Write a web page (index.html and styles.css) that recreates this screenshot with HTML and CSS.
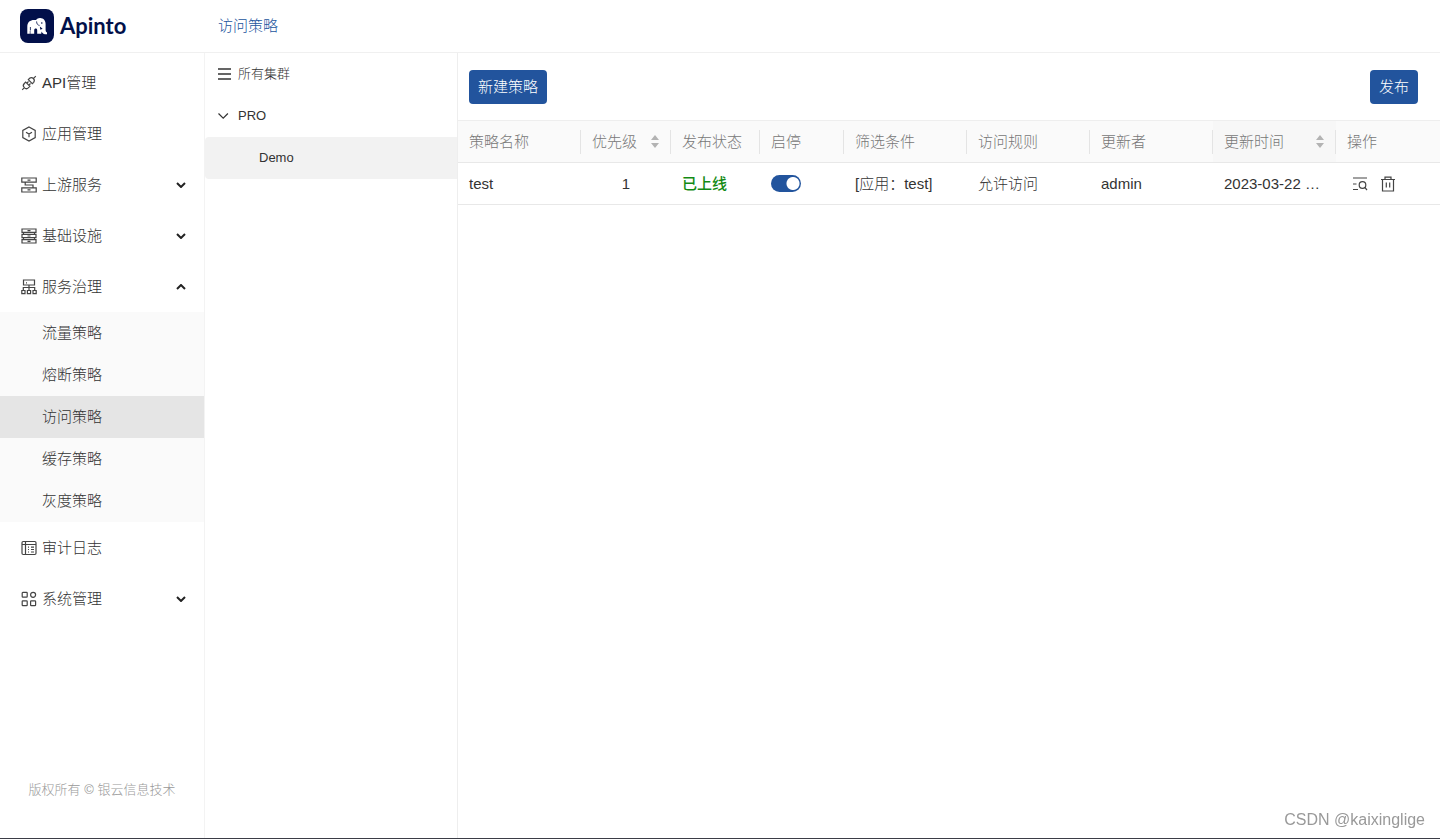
FILE: index.html
```html
<!DOCTYPE html>
<html lang="zh-CN">
<head>
<meta charset="utf-8">
<title>Apinto - 访问策略</title>
<link rel="stylesheet" href="styles.css">
</head>
<body>
<div class="app">
  <header class="topbar">
    <a class="brand" href="#">
      <svg class="brand-mark" viewBox="0 0 34 34" aria-hidden="true">
        <rect width="34" height="34" rx="8" fill="#02104a"/>
        <path fill="#fff" d="M7.3 24.8V17.5C7.3 13 10.2 10.9 14 10.9H16C17 9.5 18.5 8.8 20.2 8.9C23.6 9 25.6 11.5 25.6 15V20.8C25.6 22.3 26 23 27 23.5V25.2C24.2 25.3 22.4 24.6 21.6 22.4L21.2 24.8H17.2V21.3C17.2 20.2 16.6 19.6 15.7 19.6C14.8 19.6 14.2 20.2 14.2 21.3V24.8H10.4V20.6L9.8 22V24.8Z"/>
        <path fill="none" stroke="#02104a" stroke-width=".8" d="M16.6 12.4C16.6 14.8 17.6 16.2 19.6 16.4M10.4 18V21"/>
        <path fill="#02104a" d="M19.8 17.6 22.6 19.8 20.4 20.8Z"/>
        <circle cx="21.8" cy="14" r=".8" fill="#02104a"/>
      </svg>
      <span class="brand-name">Apinto</span>
    </a>
    <h1 class="page-title">访问策略</h1>
  </header>

  <div class="body">
    <nav class="sidebar" aria-label="主菜单">
      <div class="menu">
        <a class="menu-item" href="#">
          <svg class="icon" viewBox="0 0 16 16" aria-hidden="true"><path d="M1.2 14.8 3.4 12.6M12.6 3.4 14.8 1.2M4.7 7.1 8.9 11.3 7.5 12.7A2.9 2.9 0 0 1 3.3 8.5ZM7.3 4.7 11.3 8.7 12.7 7.3A2.9 2.9 0 0 0 8.6 3.3ZM5.9 8.1 7.5 6.5M7.9 10.1 9.5 8.5"/></svg>
          <span>API管理</span>
        </a>
        <a class="menu-item" href="#">
          <svg class="icon" viewBox="0 0 16 16" aria-hidden="true"><path d="M8 .9 14.2 4.4V11.6L8 15.1 1.8 11.6V4.4ZM5 6.2 8 8 11 6.2M8 8V11.3"/></svg>
          <span>应用管理</span>
        </a>
        <button class="menu-item" type="button" aria-expanded="false">
          <svg class="icon" viewBox="0 0 16 16" aria-hidden="true"><path d="M.8 1H15.2V5.2H.8ZM.8 10.8H15.2V15H.8ZM4.2 5.2V8H12V10.8M6.5 3.1H9.5M6.5 12.9H9.5"/></svg>
          <span>上游服务</span>
          <svg class="arrow" viewBox="0 0 10 6" aria-hidden="true"><path d="M1 1 5 5 9 1"/></svg>
        </button>
        <button class="menu-item" type="button" aria-expanded="false">
          <svg class="icon" viewBox="0 0 16 16" aria-hidden="true"><path d="M1 1H15V4.4H1ZM1 6.3H15V9.7H1ZM1 11.6H15V15H1ZM6.5 2.7H9.5M6.5 8H9.5M6.5 13.3H9.5M2.5 4.4V6.3M13.5 4.4V6.3M2.5 9.7V11.6M13.5 9.7V11.6"/></svg>
          <span>基础设施</span>
          <svg class="arrow" viewBox="0 0 10 6" aria-hidden="true"><path d="M1 1 5 5 9 1"/></svg>
        </button>
        <button class="menu-item" type="button" aria-expanded="true">
          <svg class="icon" viewBox="0 0 16 16" aria-hidden="true"><path d="M2.5 1H13.5V6H2.5ZM5 3.8H6M8 6V11M2.3 11.5V8.5H13.7V11.5M.8 11.5H4V14.7H.8ZM6.4 11.5H9.6V14.7H6.4ZM12 11.5H15.2V14.7H12Z"/></svg>
          <span>服务治理</span>
          <svg class="arrow" viewBox="0 0 10 6" aria-hidden="true"><path d="M1 5 5 1 9 5"/></svg>
        </button>
        <div class="submenu">
          <a class="submenu-item" href="#">流量策略</a>
          <a class="submenu-item" href="#">熔断策略</a>
          <a class="submenu-item is-active" href="#" aria-current="page">访问策略</a>
          <a class="submenu-item" href="#">缓存策略</a>
          <a class="submenu-item" href="#">灰度策略</a>
        </div>
        <a class="menu-item" href="#">
          <svg class="icon" viewBox="0 0 16 16" aria-hidden="true"><path d="M2.2 1.5H13.8Q15 1.5 15 2.7V13.3Q15 14.5 13.8 14.5H2.2Q1 14.5 1 13.3V2.7Q1 1.5 2.2 1.5ZM4.5 1.5V14.5M1 4.5H15M10 7.2H13M10 9.5H13M10 12H13M7 7.2H8M7 9.5H8M7 12H8"/></svg>
          <span>审计日志</span>
        </a>
        <button class="menu-item" type="button" aria-expanded="false">
          <svg class="icon" viewBox="0 0 16 16" aria-hidden="true"><rect x="1.2" y="1.4" width="5" height="4.8" rx=".7"/><rect x="1.2" y="9.8" width="5" height="4.8" rx=".7"/><rect x="9.6" y="9.8" width="5" height="4.8" rx=".7"/><circle cx="12.1" cy="3.8" r="2.5"/></svg>
          <span>系统管理</span>
          <svg class="arrow" viewBox="0 0 10 6" aria-hidden="true"><path d="M1 1 5 5 9 1"/></svg>
        </button>
      </div>
      <p class="copyright">版权所有 © 银云信息技术</p>
    </nav>

    <aside class="clusters" aria-label="集群">
      <button class="cluster-row" type="button">
        <svg class="cluster-icon" viewBox="0 0 13 12" aria-hidden="true"><path d="M0 1H13M0 6H13M0 11H13"/></svg>
        <span>所有集群</span>
      </button>
      <button class="cluster-row" type="button" aria-expanded="true">
        <svg class="cluster-icon cluster-caret" viewBox="0 0 13 12" aria-hidden="true"><path d="M.5 3.5 5.2 8.2 9.9 3.5"/></svg>
        <span>PRO</span>
      </button>
      <a class="cluster-row cluster-child" href="#">Demo</a>
    </aside>

    <main class="content">
      <div class="toolbar">
        <button class="btn" type="button">新建策略</button>
        <button class="btn" type="button">发布</button>
      </div>
      <table class="table">
        <colgroup>
          <col><col class="col-priority"><col class="col-status"><col class="col-switch">
          <col><col><col><col><col class="col-actions">
        </colgroup>
        <thead>
          <tr>
            <th>策略名称</th>
            <th>
              <div class="sortable">优先级
                <button class="sort" type="button" aria-label="按优先级排序"><svg viewBox="0 0 8 13"><path d="M4 0 8 5H0ZM0 8H8L4 13Z"/></svg></button>
              </div>
            </th>
            <th>发布状态</th>
            <th>启停</th>
            <th>筛选条件</th>
            <th>访问规则</th>
            <th>更新者</th>
            <th class="is-sorted">
              <div class="sortable">更新时间
                <button class="sort" type="button" aria-label="按更新时间排序"><svg viewBox="0 0 8 13"><path d="M4 0 8 5H0ZM0 8H8L4 13Z"/></svg></button>
              </div>
            </th>
            <th>操作</th>
          </tr>
        </thead>
        <tbody>
          <tr>
            <td>test</td>
            <td class="cell-number">1</td>
            <td><strong class="online">已上线</strong></td>
            <td><input class="switch" type="checkbox" role="switch" aria-label="启停" checked></td>
            <td>[应用：test]</td>
            <td>允许访问</td>
            <td>admin</td>
            <td>2023-03-22 …</td>
            <td>
              <div class="actions">
                <button class="action" type="button" aria-label="查看"><svg viewBox="0 0 16 16"><path d="M1 2H15M1 8H4.5M1 13.5H6"/><circle cx="10.5" cy="9" r="3.3"/><path d="M12.8 11.4 15 14"/></svg></button>
                <button class="action" type="button" aria-label="删除"><svg viewBox="0 0 16 16"><path d="M1 3.5H15M5 3.5V1.2H11V3.5M2.5 3.5V15H13.5V3.5M6.3 6.5V11.5M9.7 6.5V11.5"/></svg></button>
              </div>
            </td>
          </tr>
        </tbody>
      </table>
    </main>
  </div>
  <div class="watermark">CSDN @kaixinglige</div>
</div>
</body>
</html>
```
FILE: styles.css
```css
* {
  box-sizing: border-box;
}

body {
  margin: 0;
  color: #333;
  font: 300 15px/22px "Liberation Sans", "Noto Sans CJK SC", sans-serif;
}

a {
  color: inherit;
  text-decoration: none;
}

button {
  border: 0;
  padding: 0;
  background: none;
  color: inherit;
  font: inherit;
  text-align: left;
  cursor: pointer;
}

svg {
  display: block;
  flex: none;
}

.app {
  display: flex;
  flex-direction: column;
  min-height: 100vh;
  border-bottom: 1px solid #3b3d46;
}

.topbar {
  display: flex;
  align-items: center;
  height: 53px;
  border-bottom: 1px solid #f0f0f0;
}

.brand {
  display: flex;
  align-items: center;
  gap: 6px;
  width: 205px;
  padding-left: 20px;
}

.brand-mark {
  width: 34px;
  height: 34px;
}

.brand-name {
  color: #02104a;
  font: 700 22px/34px Lato, sans-serif;
}

.page-title {
  margin: 0;
  padding-left: 13px;
  color: #22549d;
  font-size: 15px;
  font-weight: 300;
}

.body {
  display: flex;
  flex: 1;
}

.sidebar {
  display: flex;
  flex: none;
  flex-direction: column;
  justify-content: space-between;
  width: 205px;
  border-right: 1px solid #f3f3f3;
}

.menu {
  padding-top: 4px;
}

.menu-item {
  display: flex;
  align-items: center;
  gap: 5px;
  width: 100%;
  height: 51px;
  padding: 0 18px 0 21px;
}

.icon {
  width: 16px;
  height: 16px;
  fill: none;
  stroke: #444;
  stroke-width: 1.2;
}

.arrow {
  width: 10px;
  height: 6px;
  margin-left: auto;
  fill: none;
  stroke: #222;
  stroke-width: 2;
}

.submenu {
  background: #fafafa;
}

.submenu-item {
  display: block;
  padding: 10px 0 10px 42px;
}

.submenu-item.is-active {
  background: #e5e5e5;
}

.copyright {
  margin: 0;
  padding-bottom: 37px;
  color: #999;
  font-size: 13px;
  text-align: center;
}

.clusters {
  flex: none;
  width: 253px;
  border-right: 1px solid #eee;
  font-size: 13px;
}

.cluster-row {
  display: flex;
  align-items: center;
  gap: 7px;
  width: 100%;
  height: 42px;
  padding-left: 13px;
}

.cluster-icon {
  width: 13px;
  height: 12px;
  fill: none;
  stroke: #333;
  stroke-width: 1.5;
}

.cluster-caret {
  stroke-width: 1.2;
}

.cluster-child {
  padding-left: 54px;
  border-radius: 4px 0 0 4px;
  background: #f2f2f2;
}

.content {
  flex: 1;
  min-width: 0;
}

.toolbar {
  display: flex;
  justify-content: space-between;
  padding: 17px 22px 16px 11px;
}

.btn {
  padding: 6px 9px;
  border-radius: 4px;
  background: #22549d;
  color: #fff;
}

.table {
  width: 100%;
  table-layout: fixed;
  border-collapse: separate;
  border-spacing: 0;
}

.col-priority {
  width: 90px;
}

.col-status {
  width: 89px;
}

.col-switch {
  width: 84px;
}

.col-actions {
  width: 104px;
}

.table th,
.table td {
  height: 42px;
  padding: 0 11px;
  border-bottom: 1px solid #e8e8e8;
  text-align: left;
  white-space: nowrap;
}

.table th {
  height: 43px;
  border-top: 1px solid #eee;
  background: linear-gradient(#e4e4e4, #e4e4e4) right center / 1px 24px no-repeat #fafafa;
  color: #777;
  font-weight: 300;
}

.table th:last-child {
  background: #fafafa;
}

.table th.is-sorted {
  background-color: #f7f7f7;
}

.table .cell-number {
  text-align: center;
}

.sortable {
  display: flex;
  align-items: center;
  justify-content: space-between;
}

.sort {
  width: 8px;
  margin-right: 1px;
  fill: #b3b3b3;
}

.online {
  color: #138a13;
  font-weight: 500;
}

.switch {
  display: block;
  width: 30px;
  height: 17px;
  margin: 0;
  border-radius: 9px;
  appearance: none;
  background: radial-gradient(circle at 22px 50%, #fff 6px, #22549d 7px);
}

.actions {
  display: flex;
  gap: 12px;
  padding-left: 5px;
}

.action {
  width: 16px;
  fill: none;
  stroke: #444;
  stroke-width: 1.2;
}

.watermark {
  position: fixed;
  right: 15px;
  bottom: 8px;
  color: #999;
  font-size: 16px;
}
```
